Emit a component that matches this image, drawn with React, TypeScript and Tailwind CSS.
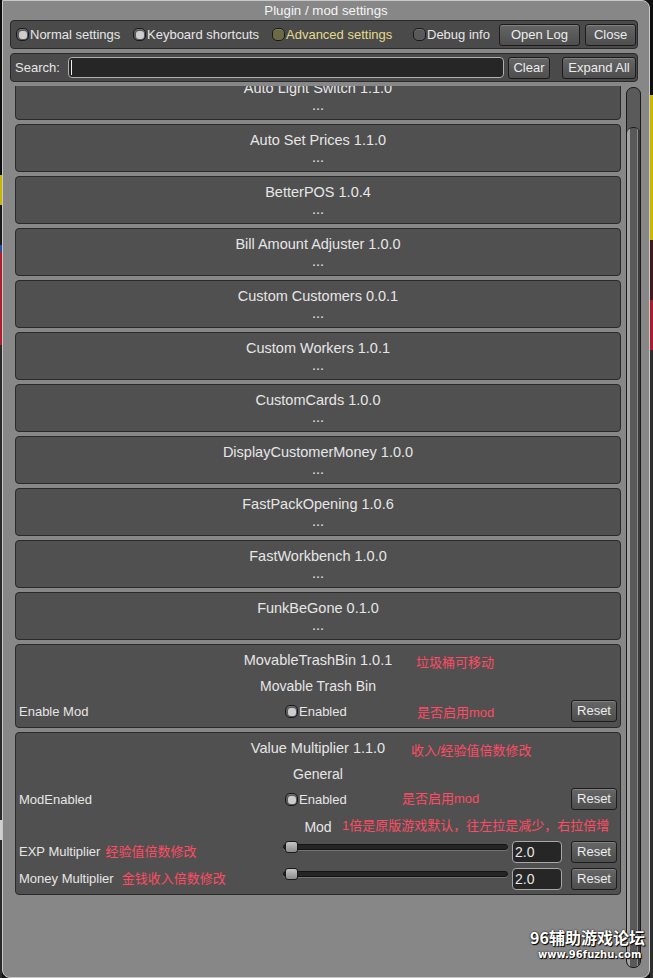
import React from "react";

const red = "text-[#ff4b63]";

function Toggle({ on = false, olive = false }: { on?: boolean; olive?: boolean }) {
  return (
    <div
      className={`flex h-[13px] w-[13px] shrink-0 items-center justify-center rounded-[5px] border border-[#1a1a1a] shadow-[inset_0_1px_0_rgba(255,255,255,0.15)] ${
        olive ? "bg-[#6c6a44]" : "bg-[#595959]"
      }`}
    >
      {on && <div className="h-[8px] w-[8px] rounded-[3px] bg-[#cdcdcd]" />}
    </div>
  );
}

function Button({ children, w }: { children: React.ReactNode; w: string }) {
  return (
    <div
      className={`${w} flex h-[22px] shrink-0 items-center justify-center rounded-[3px] border border-[#1c1c1c] bg-gradient-to-b from-[#666666] to-[#4e4e4e] text-[#ececec] shadow-[inset_0_1px_0_rgba(255,255,255,0.18)]`}
    >
      {children}
    </div>
  );
}

function Slider() {
  return (
    <div className="relative h-[12px] w-[225px] shrink-0 -translate-y-[5px]">
      <div className="absolute left-0 right-0 top-[3px] h-[6px] rounded-full border border-[#141414] bg-[#252525] shadow-[0_1px_0_rgba(255,255,255,0.2)]" />
      <div className="absolute left-[2px] top-0 h-[12px] w-[13px] rounded-[3px] border border-[#1a1a1a] bg-gradient-to-b from-[#c6c6c6] to-[#8c8c8c]" />
    </div>
  );
}

function Field() {
  return (
    <div className="flex h-[22px] w-[50px] shrink-0 items-center rounded-[4px] border border-[#a8a8a8] bg-[#262626] pl-[2px] text-[14px] text-[#e8e8e8]">
      2.0
    </div>
  );
}

function Collapsed({ name }: { name: string }) {
  return (
    <div className="h-[48px] shrink-0 rounded-[4px] border border-[#2a2a2a] bg-[#505050] pt-[7px] text-center text-[14.5px]">
      <div className="h-[16px] leading-[16px]">{name}</div>
      <div className="mt-[1px] h-[16px] leading-[16px]">...</div>
    </div>
  );
}

function ToggleRow({ label, note, noteLeft, noteTop }: { label: string; note: string; noteLeft: string; noteTop: string }) {
  return (
    <div className="relative flex h-[22px] items-center pl-[3px] pr-[3px] pt-[1px]">
      <div className="w-[264px] shrink-0">{label}</div>
      <div className="ml-[2px] flex items-center gap-[1px]">
        <Toggle on />
        <span>Enabled</span>
      </div>
      <span className={`absolute ${noteLeft} ${noteTop} ${red}`}>{note}</span>
      <div className="ml-auto -mt-[1px]">
        <Button w="w-[46px]">Reset</Button>
      </div>
    </div>
  );
}

function SliderRow({ label, note, gap }: { label: string; note: string; gap: string }) {
  return (
    <div className="flex h-[22px] items-center pl-[3px] pr-[3px]">
      <div className="flex w-[264px] shrink-0 items-center">
        <span>{label}</span>
        <span className={`${gap} ${red}`}>{note}</span>
      </div>
      <Slider />
      <div className="ml-[4px]">
        <Field />
      </div>
      <div className="ml-[9px]">
        <Button w="w-[46px]">Reset</Button>
      </div>
    </div>
  );
}

const mods = [
  "Auto Light Switch 1.1.0",
  "Auto Set Prices 1.1.0",
  "BetterPOS 1.0.4",
  "Bill Amount Adjuster 1.0.0",
  "Custom Customers 0.0.1",
  "Custom Workers 1.0.1",
  "CustomCards 1.0.0",
  "DisplayCustomerMoney 1.0.0",
  "FastPackOpening 1.0.6",
  "FastWorkbench 1.0.0",
  "FunkBeGone 0.1.0",
];

export default function App() {
  return (
    <div className="relative flex h-[978px] w-[653px] overflow-hidden bg-[#111] font-['Liberation_Sans','Noto_Sans_CJK_SC',sans-serif] text-[13px] text-[#e6e6e6]">
      <div className="w-[2px] shrink-0 bg-[linear-gradient(to_bottom,#0e0e0e_0,#0e0e0e_175px,#c9b400_175px,#c9b400_205px,#1a1a1a_205px,#1a1a1a_245px,#2c4c9c_245px,#2c4c9c_252px,#b21c2c_252px,#b21c2c_345px,#2a2a2a_345px,#2a2a2a_820px,#d0d0d0_820px,#d0d0d0_840px,#2a2a2a_840px)]" />

      <div className="flex w-[648px] shrink-0 flex-col rounded-b-[8px] rounded-tr-[8px] border border-[#c8c8c8] bg-[#878787]">
        <div className="h-[19px] text-center text-[13.3px] leading-[19px] text-[#f4f4f4]">Plugin / mod settings</div>

        {/* tabs row */}
        <div className="ml-[7px] flex h-[29px] w-[628px] items-center rounded-[4px] border border-[#2a2a2a] bg-[#4a4a4a] pl-[5px]">
          <div className="flex w-[117px] items-center gap-[1px]">
            <Toggle on />
            <span>Normal settings</span>
          </div>
          <div className="flex w-[139px] items-center gap-[1px]">
            <Toggle on />
            <span>Keyboard shortcuts</span>
          </div>
          <div className="flex w-[141px] items-center gap-[1px]">
            <Toggle olive />
            <span className="text-[#e4da8c]">Advanced settings</span>
          </div>
          <div className="flex w-[86px] items-center gap-[1px]">
            <Toggle />
            <span>Debug info</span>
          </div>
          <Button w="w-[81px]">Open Log</Button>
          <div className="ml-[5px]">
            <Button w="w-[51px]">Close</Button>
          </div>
        </div>

        {/* search row */}
        <div className="ml-[7px] mt-[4px] flex h-[29px] w-[628px] items-center rounded-[4px] border border-[#2a2a2a] bg-[#4a4a4a] pl-[4px]">
          <span className="w-[53px] shrink-0">Search:</span>
          <div className="flex h-[21px] w-[436px] shrink-0 items-center rounded-[4px] border border-[#b0b0b0] bg-[#262626] pl-[2px]">
            <div className="h-[15px] w-[1px] bg-[#f0f0f0]" />
          </div>
          <div className="ml-[4px]">
            <Button w="w-[42px]">Clear</Button>
          </div>
          <div className="ml-[12px]">
            <Button w="w-[74px]">Expand All</Button>
          </div>
        </div>

        {/* scroll view */}
        <div className="ml-[12px] mt-[4px] flex h-[884px] gap-[5px]">
          <div className="h-full w-[606px] shrink-0 overflow-hidden">
            <div className="-mt-[14px] flex flex-col gap-[4px]">
              {mods.map((m) => (
                <Collapsed key={m} name={m} />
              ))}

              <div className="shrink-0 rounded-[4px] border border-[#2a2a2a] bg-[#505050] pb-[5px] pt-[7px]">
                <div className="relative h-[16px] text-center text-[14.5px] leading-[16px]">
                  MovableTrashBin 1.0.1
                  <span className={`absolute left-[400px] top-[3px] text-[13px] ${red}`}>垃圾桶可移动</span>
                </div>
                <div className="mt-[10px] h-[16px] text-center text-[14px] leading-[16px]">Movable Trash Bin</div>
                <div className="mt-[6px]">
                  <ToggleRow label="Enable Mod" note="是否启用mod" noteLeft="left-[401px]" noteTop="top-[3px]" />
                </div>
              </div>

              <div className="shrink-0 rounded-[4px] border border-[#2a2a2a] bg-[#505050] pb-[4px] pt-[7px]">
                <div className="relative h-[16px] text-center text-[14.5px] leading-[16px]">
                  Value Multiplier 1.1.0
                  <span className={`absolute left-[395px] top-[3px] text-[13px] ${red}`}>收入/经验值倍数修改</span>
                </div>
                <div className="mt-[10px] h-[16px] text-center text-[14px] leading-[16px]">General</div>
                <div className="mt-[6px]">
                  <ToggleRow label="ModEnabled" note="是否启用mod" noteLeft="left-[386px]" noteTop="top-[1px]" />
                </div>
                <div className="relative mt-[9px] h-[16px] text-center text-[14px] leading-[16px]">
                  Mod
                  <span className={`absolute left-[326px] top-[-1px] text-[13px] ${red}`}>1倍是原版游戏默认，往左拉是减少，右拉倍增</span>
                </div>
                <div className="mt-[6px]">
                  <SliderRow label="EXP Multiplier" note="经验值倍数修改" gap="ml-[5px]" />
                </div>
                <div className="mt-[5px]">
                  <SliderRow label="Money Multiplier" note="金钱收入倍数修改" gap="ml-[8px]" />
                </div>
              </div>
            </div>
          </div>

          {/* scrollbar */}
          <div className="mt-[1px] flex h-[881px] w-[15px] shrink-0 flex-col overflow-hidden rounded-[7px] border border-[#1a1a1a] bg-[#5a5a5a]">
            <div className="h-[39px] shrink-0" />
            <div className="flex-1 rounded-[6px] border-t border-[#1a1a1a] bg-[linear-gradient(to_right,#a4a4a4_0,#a4a4a4_3px,#595959_3px,#595959_10px,#8a8a8a_10px,#8a8a8a_11px,#3a3a3a_11px)]" />
          </div>
        </div>
      </div>

      <div className="w-[3px] shrink-0 bg-[linear-gradient(to_bottom,#101010_0,#101010_95px,#c8b800_95px,#c8b800_240px,#3e1c1c_240px,#3e1c1c_300px,#a81e2e_300px,#a81e2e_350px,#2e2e2e_350px)]" />

      {/* watermark */}
      <div className="absolute left-[530px] top-[927px] font-['Noto_Sans_CJK_SC',sans-serif] text-[16px] font-bold leading-[20px] text-white [text-shadow:0_0_2px_#000,1px_1px_1px_#000]">
        96辅助游戏论坛
      </div>
      <div className="absolute left-[538px] top-[948px] font-['DejaVu_Sans',sans-serif] text-[10px] font-bold leading-[14px] text-white [text-shadow:0_0_2px_#000,1px_1px_1px_#000]">
        www.96fuzhu.com
      </div>
    </div>
  );
}
